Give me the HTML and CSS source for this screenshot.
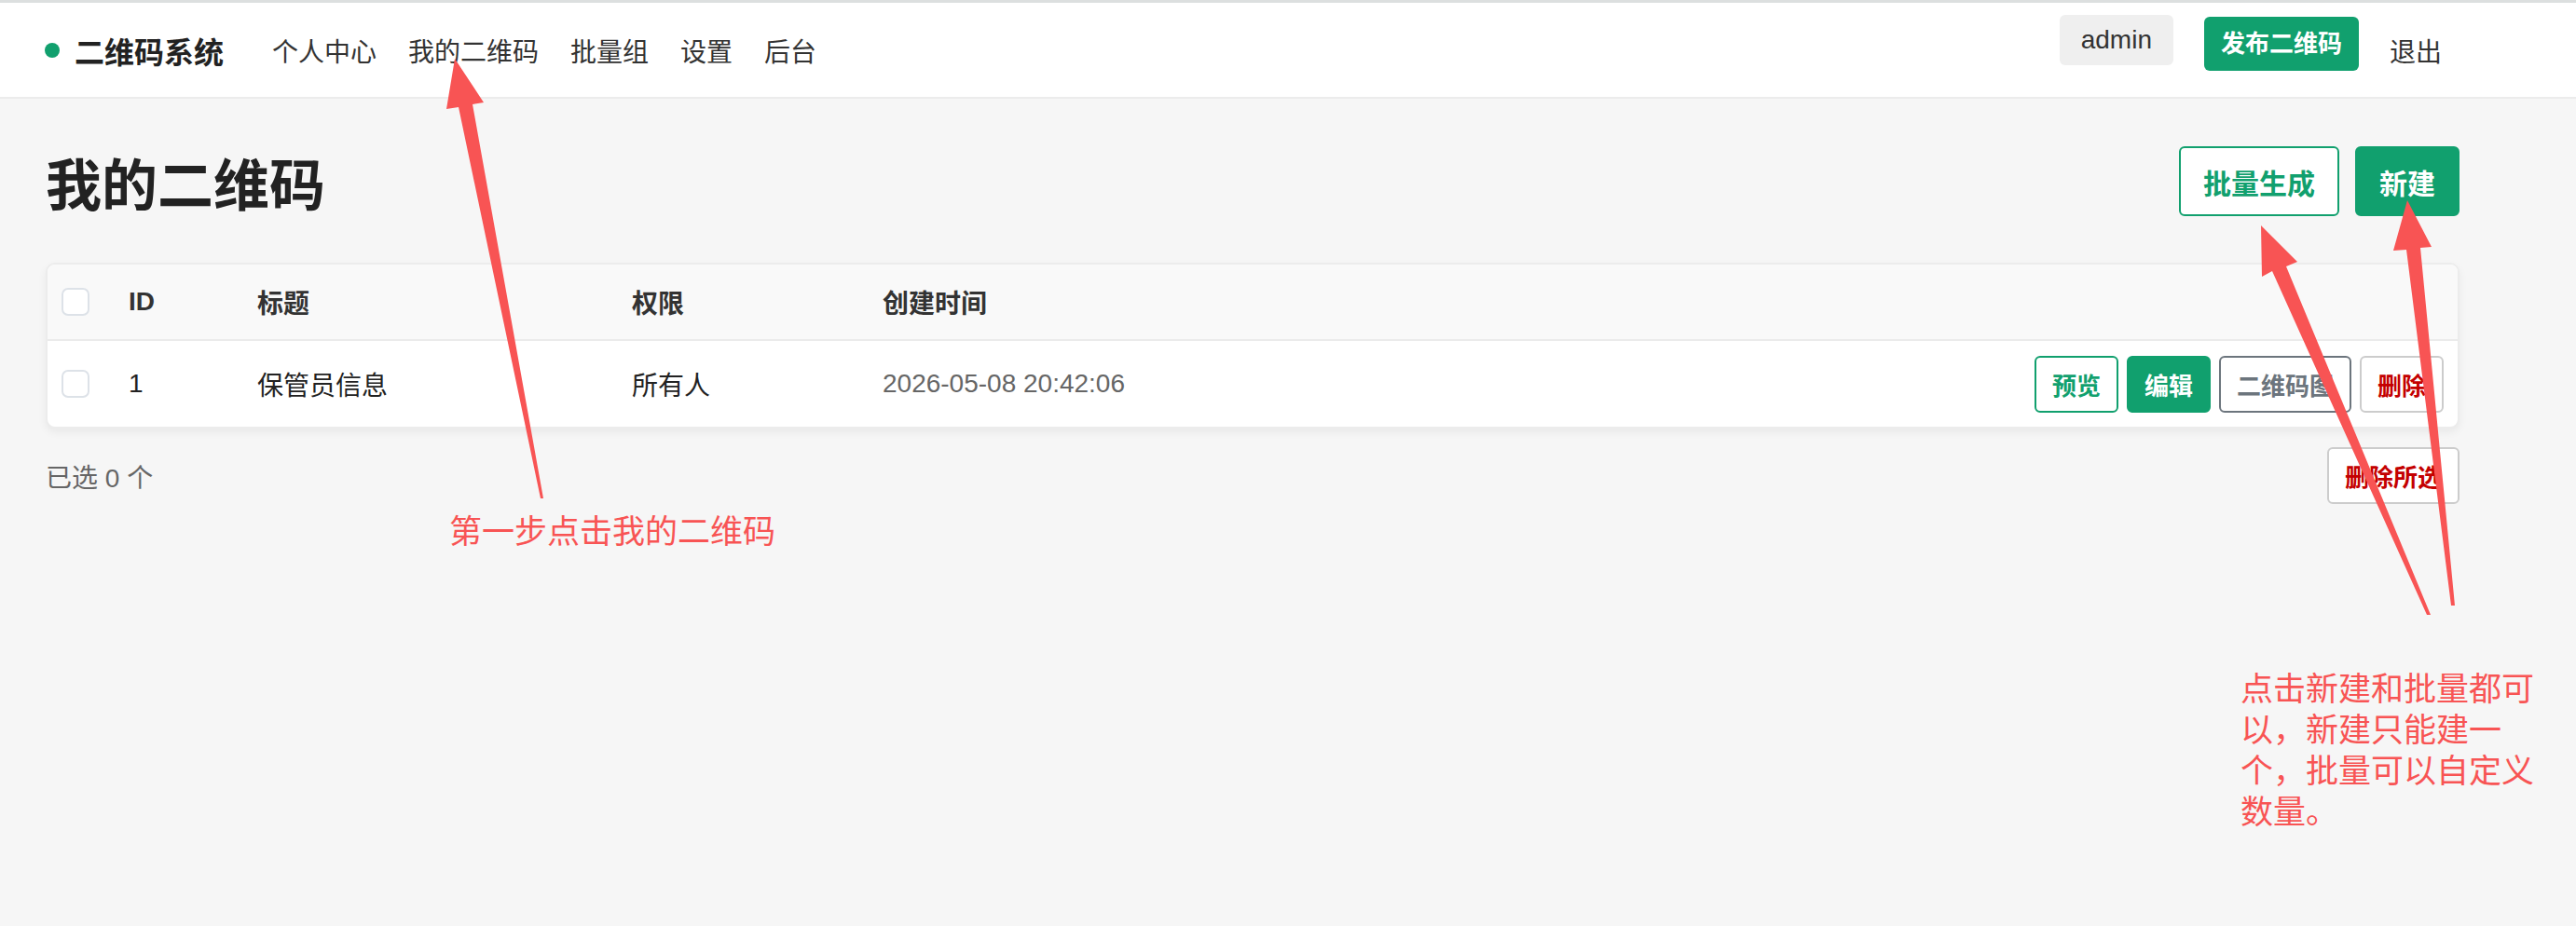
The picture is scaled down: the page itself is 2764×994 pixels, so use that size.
FILE: index.html
```html
<!DOCTYPE html>
<html lang="zh-CN">
<head>
    <meta charset="UTF-8">
    <title>我的二维码 - 二维码系统</title>
    <link rel="stylesheet" href="styles.css">
</head>
<body>
<div class="topstrip"></div>
<header class="nav">
    <div class="brand"><span class="dot"></span>二维码系统</div>
    <nav class="links">
        <a href="#">个人中心</a>
        <a href="#">我的二维码</a>
        <a href="#">批量组</a>
        <a href="#">设置</a>
        <a href="#">后台</a>
    </nav>
    <div class="nav-right">
        <span class="user">admin</span>
        <a class="publish" href="#">发布二维码</a>
        <a class="logout" href="#">退出</a>
    </div>
</header>

<main class="page">
    <div class="page-head">
        <h1>我的二维码</h1>
        <div class="head-actions">
            <button class="btn btn-outline">批量生成</button>
            <button class="btn btn-solid">新建</button>
        </div>
    </div>

    <div class="card">
        <table class="list">
            <thead>
            <tr>
                <th class="c-check"><input type="checkbox"></th>
                <th class="c-id">ID</th>
                <th class="c-title">标题</th>
                <th class="c-perm">权限</th>
                <th class="c-time">创建时间</th>
                <th class="c-ops"></th>
            </tr>
            </thead>
            <tbody>
            <tr>
                <td><input type="checkbox"></td>
                <td>1</td>
                <td>保管员信息</td>
                <td>所有人</td>
                <td class="time">2026-05-08 20:42:06</td>
                <td>
                    <div class="ops">
                        <button class="sm sm-green">预览</button>
                        <button class="sm sm-fill">编辑</button>
                        <button class="sm sm-gray">二维码图</button>
                        <button class="sm sm-red">删除</button>
                    </div>
                </td>
            </tr>
            </tbody>
        </table>
    </div>

    <div class="foot-row">
        <span class="picked">已选 0 个</span>
        <button class="sm sm-red">删除所选</button>
    </div>
</main>

<!-- annotation layer drawn on top of the screenshot -->
<svg class="annot" width="2764" height="994" viewBox="0 0 2764 994">
    <polygon points="488,63 519,110 507,112 583,535 580,535 492,115 479,117"/>
    <polygon points="2426,242 2465,281 2453,286 2608,660 2604,660 2438,291 2427,297"/>
    <polygon points="2583,215 2609,265 2597,266 2634,650 2630,650 2582,268 2568,269"/>
</svg>
<div class="note note-step">第一步点击我的二维码</div>
<div class="note note-new">点击新建和批量都可<br>以，新建只能建一<br>个，批量可以自定义<br>数量。</div>
</body>
</html>
```

FILE: styles.css
```css
html, body {
  margin: 0;
  padding: 0;
  background: #f6f6f6;
}
body {
  font-family: "Liberation Sans", "Noto Sans CJK SC", sans-serif;
  color: #333;
  width: 2764px;
  height: 994px;
  position: relative;
  overflow: hidden;
}
a {
  color: inherit;
  text-decoration: none;
}
button {
  font-family: inherit;
  cursor: pointer;
}

.topstrip {
  height: 3px;
  background: #dcdfdf;
}

/* top navigation */
.nav {
  height: 101px;
  background: #fff;
  border-bottom: 2px solid #ececec;
  display: flex;
  align-items: center;
  padding: 0 144px 0 48px;
}
.brand {
  display: flex;
  align-items: center;
  font-size: 32px;
  font-weight: bold;
  color: #222;
}
.dot {
  width: 16px;
  height: 16px;
  border-radius: 50%;
  background: #11a06e;
  margin-right: 16px;
}
.links {
  display: flex;
  gap: 34px;
  margin-left: 52px;
  font-size: 28px;
}
.nav-right {
  margin-left: auto;
  display: flex;
  align-items: center;
  gap: 33px;
  font-size: 28px;
}
.user {
  background: #efefef;
  border-radius: 6px;
  padding: 0 23px;
  height: 54px;
  line-height: 54px;
  margin-bottom: 22px;
}
.publish {
  background: #11a06e;
  color: #fff;
  font-size: 26px;
  font-weight: bold;
  border-radius: 6px;
  height: 58px;
  line-height: 58px;
  padding: 0 18px;
  margin-bottom: 14px;
}

/* page body */
.page {
  padding: 51px 125px 0 49px;
}
.page-head {
  display: flex;
  align-items: center;
  justify-content: space-between;
  height: 75px;
}
h1 {
  margin: 0;
  font-size: 60px;
  font-weight: bold;
  color: #222;
}
.head-actions {
  display: flex;
  gap: 17px;
}
.btn {
  height: 75px;
  padding: 0 24px;
  font-size: 30px;
  font-weight: bold;
  border-radius: 6px;
  border: 2px solid #11a06e;
}
.btn-outline {
  background: #fff;
  color: #11a06e;
}
.btn-solid {
  background: #11a06e;
  color: #fff;
}

.card {
  margin-top: 50px;
  background: #fff;
  border: 2px solid #ececec;
  border-radius: 10px;
  box-shadow: 0 4px 10px rgba(0, 0, 0, 0.06);
  overflow: hidden;
}
.list {
  width: 100%;
  border-collapse: collapse;
  table-layout: fixed;
  font-size: 28px;
}
.list th {
  background: #f9f9f9;
  height: 80px;
  text-align: left;
  font-weight: bold;
  color: #333;
  border-bottom: 2px solid #ebebeb;
  padding: 0 0 0 15px;
}
.list td {
  height: 92px;
  padding: 0 0 0 15px;
  color: #222;
}
.c-check { width: 57px; }
.c-id { width: 123px; }
.c-title { width: 387px; }
.c-perm { width: 254px; }
.c-time { width: 545px; }
.list td.time {
  color: #666;
}
.list input[type="checkbox"] {
  appearance: none;
  -webkit-appearance: none;
  width: 30px;
  height: 30px;
  margin: 0;
  display: block;
  border: 2px solid #dde2e8;
  border-radius: 7px;
  background: #fff;
}
.ops {
  display: flex;
  justify-content: flex-end;
  gap: 9px;
  padding-right: 15px;
}
.sm {
  height: 61px;
  padding: 0 17px;
  font-size: 26px;
  font-weight: bold;
  border-radius: 6px;
  border: 2px solid #ccc;
  background: #fff;
}
.sm-green {
  border-color: #11a06e;
  color: #11a06e;
}
.sm-fill {
  border-color: #11a06e;
  background: #11a06e;
  color: #fff;
}
.sm-gray {
  border-color: #6c757d;
  color: #6c757d;
}
.sm-red {
  border-color: #cccccc;
  color: #c40000;
}

.foot-row {
  margin-top: 20px;
  display: flex;
  align-items: center;
  justify-content: space-between;
}
.picked {
  font-size: 28px;
  color: #666;
}

/* red guide marks */
.annot {
  position: absolute;
  left: 0;
  top: 0;
  pointer-events: none;
}
.annot polygon {
  fill: #f85454;
}
.note {
  position: absolute;
  color: #f85454;
  font-family: "Noto Sans CJK SC", sans-serif;
  font-size: 35px;
  line-height: 44px;
}
.note-step {
  left: 482px;
  top: 546px;
}
.note-new {
  left: 2404px;
  top: 715px;
}
```
